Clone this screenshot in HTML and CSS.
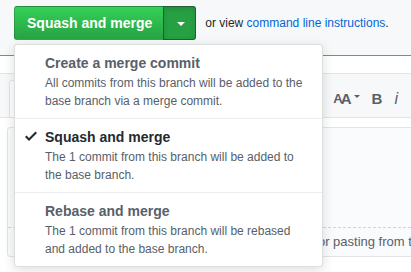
FILE: index.html
```html
<!DOCTYPE html>
<html lang="en">
<head>
    <meta charset="UTF-8" />
    <title>Merge pull request</title>
    <link rel="stylesheet" href="styles.css">
</head>
<body>
    <div class="merge-head">
        <div class="btn-group">
            <button class="btn btn-merge" type="button">Squash and merge</button>
            <button class="btn btn-toggle" type="button"><span class="caret"></span></button>

            <div class="merge-menu">
                <div class="menu-item">
                    <div class="item-title">Create a merge commit</div>
                    <div class="item-desc">All commits from this branch will be added to the base branch via a merge commit.</div>
                </div>
                <div class="menu-item selected">
                    <svg class="check" width="12" height="16" viewBox="0 0 12 16">
                        <path fill-rule="evenodd" d="M12 5l-8 8-4-4 1.5-1.5L4 10l6.5-6.5L12 5z"></path>
                    </svg>
                    <div class="item-title">Squash and merge</div>
                    <div class="item-desc">The 1 commit from this branch will be added to the base branch.</div>
                </div>
                <div class="menu-item">
                    <div class="item-title">Rebase and merge</div>
                    <div class="item-desc">The 1 commit from this branch will be rebased and added to the base branch.</div>
                </div>
            </div>
        </div>
        <span class="merge-note">or view <a href="#">command line instructions</a>.</span>
    </div>

    <div class="merge-body">
        <div class="comment-head">
            <div class="tab active">Write</div>
            <div class="tab">Preview</div>
            <div class="toolbar">
                <span class="tool tool-size"><span class="a-small">A</span><span class="a-big">A</span><span class="mini-caret"></span></span>
                <span class="tool tool-bold">B</span>
                <span class="tool tool-italic">i</span>
            </div>
        </div>

        <div class="write-box">
            <div class="write-area"></div>
            <div class="attach-bar">Attach files by dragging &amp; dropping, selecting them, or pasting from the clipboard.</div>
        </div>
    </div>
</body>
</html>
```

FILE: styles.css
```css
* {
    margin: 0;
    padding: 0;
    box-sizing: border-box;
    font-family: 'Liberation Sans', Arial, sans-serif;
}

html, body {
    background: #ffffff;
}

body {
    width: 411px;
    height: 272px;
    overflow: hidden;
    color: #24292e;
}

/* Merge button row */
.merge-head {
    height: 55px;
    padding: 6px 0 0 14px;
    display: flex;
    align-items: flex-start;
    background: #f6f8fa;
}

.btn-group {
    position: relative;
    display: flex;
}

.btn {
    height: 34px;
    font-size: 14px;
    font-weight: 700;
    line-height: 20px;
    color: #ffffff;
    border: 1px solid rgba(27, 31, 35, 0.2);
    cursor: pointer;
}

.btn-merge {
    padding: 6px 11px 6px 12px;
    border-radius: 3px 0 0 3px;
    background: linear-gradient(-180deg, #34d058 0%, #28a745 90%);
}

.btn-toggle {
    width: 33px;
    margin-left: -1px;
    border-radius: 0 3px 3px 0;
    border-color: rgba(27, 31, 35, 0.5);
    background: #279f43;
    box-shadow: inset 0 2px 4px rgba(27, 31, 35, 0.15);
    display: flex;
    align-items: center;
    justify-content: center;
}

.caret {
    width: 0;
    height: 0;
    margin: 2px 0 0 2px;
    border-top: 4px solid #ffffff;
    border-left: 4px solid transparent;
    border-right: 4px solid transparent;
}

.merge-note {
    margin: 9px 0 0 9px;
    font-size: 12px;
    line-height: 16px;
    color: #24292e;
}

.merge-note a {
    color: #0366d6;
    text-decoration: none;
}

/* Merge method menu */
.merge-menu {
    position: absolute;
    top: 38px;
    left: 0;
    width: 309px;
    z-index: 10;
    background: #ffffff;
    border: 1px solid rgba(27, 31, 35, 0.15);
    border-radius: 3px;
    box-shadow: 0 3px 12px rgba(27, 31, 35, 0.15);
}

.menu-item {
    position: relative;
    padding: 8px 12px 8px 30px;
    border-bottom: 1px solid #eaecef;
}

.menu-item:last-child {
    border-bottom: none;
}

.item-title {
    font-size: 14px;
    font-weight: 700;
    line-height: 21px;
    color: #586069;
}

.menu-item.selected .item-title {
    color: #24292e;
}

.item-desc {
    font-size: 12px;
    line-height: 18px;
    color: #586069;
}

.check {
    position: absolute;
    top: 9px;
    left: 10px;
    fill: #24292e;
}

/* Comment form underneath */
.merge-body {
    border-top: 1px solid #2cbe4e;
    padding-top: 17px;
}

.comment-head {
    height: 45px;
    padding: 6px 13px 0 9px;
    display: flex;
    align-items: flex-start;
    background: #f6f8fa;
    border-top: 1px solid #e1e4e8;
    border-bottom: 1px solid #e1e4e8;
}

.tab {
    height: 38px;
    padding: 0 14px;
    font-size: 14px;
    line-height: 36px;
    color: #586069;
    border: 1px solid transparent;
    border-radius: 3px 3px 0 0;
}

.tab.active {
    background: #ffffff;
    border-color: #e1e4e8;
    color: #24292e;
}

.toolbar {
    margin-left: auto;
    height: 37px;
    display: flex;
    align-items: center;
    color: #586069;
}

.tool {
    display: flex;
    align-items: flex-end;
    font-weight: 700;
}

.tool-size {
    margin-right: 12px;
    letter-spacing: -2px;
}

.a-small {
    font-size: 13px;
    line-height: 14px;
}

.a-big {
    font-size: 15px;
    line-height: 14px;
}

.mini-caret {
    align-self: center;
    margin: 0 0 4px 4px;
    border-top: 3px solid #586069;
    border-left: 3px solid transparent;
    border-right: 3px solid transparent;
}

.tool-bold {
    font-size: 15px;
    line-height: 14px;
    margin-right: 12px;
}

.tool-italic {
    font-size: 16px;
    line-height: 14px;
    font-style: italic;
    font-weight: 400;
}

.write-box {
    width: 440px;
    margin: 9px 0 0 7px;
    background: #fafbfc;
    border: 1px solid #e1e4e8;
    border-radius: 3px;
}

.write-area {
    height: 99px;
}

.attach-bar {
    height: 29px;
    padding: 6px 10px;
    font-size: 13px;
    line-height: 16px;
    color: #586069;
    white-space: nowrap;
    border-top: 1px dashed #d1d5da;
}
```
